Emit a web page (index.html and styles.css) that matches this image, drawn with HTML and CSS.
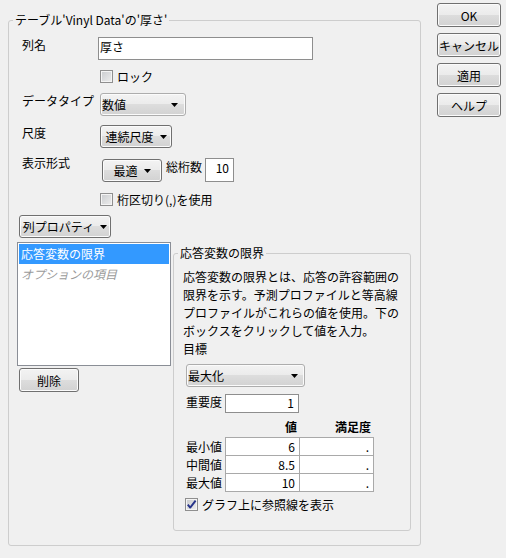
FILE: index.html
```html
<!DOCTYPE html>
<html lang="ja">
<head>
<meta charset="utf-8">
<title>列情報</title>
<link rel="stylesheet" href="styles.css">
</head>
<body>
<div class="window">
  <fieldset class="group main">
    <legend>テーブル'Vinyl Data'の'厚さ'</legend>
    <div class="main-body">
      <div class="row r-name">
        <span class="label">列名</span>
        <div class="field name-field">厚さ</div>
      </div>
      <div class="row check-row r-lock">
        <span class="check"></span><span class="check-text">ロック</span>
      </div>
      <div class="row r-type">
        <span class="label">データタイプ</span>
        <div class="combo type-combo"><span class="combo-text">数値</span><svg class="arrow" width="7" height="4" viewBox="0 0 7 4"><path d="M0 0H7L3.5 4Z"/></svg></div>
      </div>
      <div class="row r-scale">
        <span class="label">尺度</span>
        <div class="menu-btn scale-btn"><span>連続尺度</span><svg class="arrow" width="7" height="4" viewBox="0 0 7 4"><path d="M0 0H7L3.5 4Z"/></svg></div>
      </div>
      <div class="row r-format">
        <span class="label label-format">表示形式</span>
        <div class="menu-btn format-btn"><span>最適</span><svg class="arrow" width="7" height="4" viewBox="0 0 7 4"><path d="M0 0H7L3.5 4Z"/></svg></div>
        <span class="digits-label">総桁数</span>
        <div class="field digits-field">10</div>
      </div>
      <div class="row check-row r-sep">
        <span class="check"></span><span class="check-text">桁区切り(,)を使用</span>
      </div>
      <div class="row r-props">
        <div class="menu-btn props-btn"><span>列プロパティ</span><svg class="arrow" width="7" height="4" viewBox="0 0 7 4"><path d="M0 0H7L3.5 4Z"/></svg></div>
      </div>
      <div class="props-area">
        <div class="props-left">
          <div class="listbox">
            <div class="item selected">応答変数の限界</div>
            <div class="item option">オプションの項目</div>
          </div>
          <div class="btn delete-btn">削除</div>
        </div>
        <fieldset class="group limits">
          <legend>応答変数の限界</legend>
          <div class="limits-body">
            <p class="desc">応答変数の限界とは、応答の許容範囲の<br>限界を示す。予測プロファイルと等高線<br>プロファイルがこれらの値を使用。下の<br>ボックスをクリックして値を入力。</p>
            <div class="goal-label">目標</div>
            <div class="indent">
              <div class="combo goal-combo"><span class="combo-text">最大化</span><svg class="arrow" width="7" height="4" viewBox="0 0 7 4"><path d="M0 0H7L3.5 4Z"/></svg></div>
              <div class="importance">
                <span class="imp-label">重要度</span>
                <div class="field imp-field">1</div>
              </div>
              <div class="limits-grid">
                <span class="hdr-blank"></span>
                <span class="hdr">値</span>
                <span class="hdr">満足度</span>

                <span class="row-label first">最小値</span>
                <span class="cell c1 first">6</span>
                <span class="cell c2 first">.</span>

                <span class="row-label">中間値</span>
                <span class="cell c1">8.5</span>
                <span class="cell c2">.</span>

                <span class="row-label">最大値</span>
                <span class="cell c1">10</span>
                <span class="cell c2">.</span>
              </div>
              <div class="row check-row r-ref">
                <span class="check checked"><svg width="11" height="11" viewBox="0 0 11 11"><path d="M1.8 5.6 L4.2 8.6 L9.6 1.6" fill="none" stroke="#26338a" stroke-width="1.9" stroke-linejoin="round"/></svg></span><span class="check-text">グラフ上に参照線を表示</span>
              </div>
            </div>
          </div>
        </fieldset>
      </div>
    </div>
  </fieldset>
  <div class="buttons">
    <div class="btn side-btn">OK</div>
    <div class="btn side-btn">キャンセル</div>
    <div class="btn side-btn">適用</div>
    <div class="btn side-btn">ヘルプ</div>
  </div>
</div>
</body>
</html>
```

FILE: styles.css
```css
* {
  box-sizing: border-box;
}

html,
body {
  margin: 0;
  padding: 0;
}

body {
  width: 506px;
  height: 558px;
  overflow: hidden;
  background: #f0f0f0;
  color: #000;
  font-family: "Noto Sans CJK JP", "Noto Sans", sans-serif;
  font-size: 12px;
  line-height: 17px;
}

.window {
  display: flex;
  align-items: flex-start;
}

.group {
  margin: 0;
  padding: 0;
  min-width: 0;
  border: 1px solid #cdcdcd;
  border-radius: 3px;
}

.group > legend {
  padding: 0 2px;
  margin-left: 4px;
  line-height: 16px;
}

.main {
  margin: 12px 0 0 8px;
  width: 413px;
}

.main-body {
  padding: 0 9px 14px 8px;
}

.row {
  display: flex;
  align-items: flex-start;
}

.check-row {
  align-items: center;
  height: 13px;
}

.label {
  flex-shrink: 0;
  width: 78px;
  margin-left: 5px;
  margin-top: -1px;
  white-space: nowrap;
}

.label-format {
  margin-top: -4px;
}

.r-name {
  margin-top: 9px;
}

.r-lock {
  margin-top: 10px;
  margin-left: 83px;
}

.r-type {
  margin-top: 10px;
}

.r-scale {
  margin-top: 9px;
}

.r-format {
  margin-top: 10px;
}

.r-sep {
  margin-top: 11px;
  margin-left: 83px;
}

.r-props {
  margin-top: 9px;
  margin-left: 2px;
}

.field {
  background: #fff;
  border: 1px solid #8e8e8e;
  white-space: nowrap;
}

.name-field {
  margin-left: -2px;
  width: 215px;
  height: 23px;
  padding-left: 1px;
}

.digits-label {
  margin-left: 4px;
  white-space: nowrap;
}

.digits-field {
  margin-left: 3px;
  width: 29px;
  height: 24px;
  text-align: right;
  padding-right: 4px;
}

.check {
  flex-shrink: 0;
  width: 13px;
  height: 13px;
  border: 1px solid #8f8f8f;
  background: linear-gradient(135deg, #c9cbce 0%, #eeeeee 100%);
  box-shadow: inset 0 0 0 1px #f4f4f4;
  display: flex;
  align-items: center;
  justify-content: center;
}

.check svg {
  display: block;
}

.check-text {
  margin-left: 4px;
  white-space: nowrap;
}

.btn,
.combo,
.menu-btn {
  border: 1px solid #707070;
  border-radius: 3px;
  background: linear-gradient(#f3f3f3 0%, #ebebeb 50%, #dddddd 50%, #d2d2d2 100%);
  box-shadow: inset 0 0 0 1px #fbfbfb;
  white-space: nowrap;
}

.btn {
  display: flex;
  align-items: center;
  justify-content: center;
}

.arrow {
  display: block;
  flex-shrink: 0;
  fill: #000;
}

.combo {
  display: flex;
  align-items: center;
  justify-content: space-between;
  height: 23px;
  padding: 0 7px 0 1px;
  border-color: #adadad;
}

.type-combo {
  width: 86px;
}

.menu-btn {
  display: flex;
  align-items: center;
  justify-content: center;
  gap: 6px;
  height: 23px;
}

.scale-btn {
  width: 72px;
}

.format-btn {
  width: 60px;
  margin-left: 2px;
  margin-top: 1px;
}

.props-btn {
  width: 92px;
}

.buttons {
  display: flex;
  flex-direction: column;
  gap: 6px;
  margin: 3px 0 0 16px;
}

.side-btn {
  width: 64px;
  height: 24px;
}

.props-area {
  display: flex;
  align-items: flex-start;
  margin-top: 4px;
}

.props-left {
  display: flex;
  flex-direction: column;
  align-items: flex-start;
}

.listbox {
  width: 154px;
  height: 124px;
  background: #fff;
  border: 1px solid #8a8e96;
  padding: 1px;
}

.item {
  height: 20px;
  line-height: 20px;
  padding-left: 2px;
  white-space: nowrap;
}

.item.selected {
  background: #3399ff;
  color: #fff;
}

.item.option {
  font-style: italic;
  color: #9a9a9a;
}

.delete-btn {
  margin-top: 2px;
  margin-left: 2px;
  width: 60px;
  height: 24px;
}

.limits {
  margin: 3px 0 0 2px;
  width: 238px;
}

.limits-body {
  padding: 7px 6px 19px 9px;
}

.desc {
  margin: 0;
  line-height: 18px;
  white-space: nowrap;
}

.goal-label {
  line-height: 18px;
}

.indent {
  margin-left: 3px;
}

.goal-combo {
  margin-top: 6px;
  width: 119px;
  padding-right: 6px;
}

.importance {
  display: flex;
  align-items: flex-start;
  margin-top: 7px;
}

.imp-label {
  width: 39px;
  margin-top: -1px;
  white-space: nowrap;
}

.imp-field {
  width: 74px;
  height: 19px;
  line-height: 15px;
  text-align: right;
  padding-right: 4px;
}

.limits-grid {
  display: grid;
  grid-template-columns: 39px 75px 74px;
  margin-top: 5px;
}

.hdr {
  font-weight: bold;
  text-align: right;
  padding-right: 3px;
  height: 19px;
}

.row-label {
  height: 19px;
  line-height: 19px;
  margin-top: -1px;
  white-space: nowrap;
}

.row-label.first {
  margin-top: 0;
}

.cell {
  background: #fff;
  border: 1px solid #a9a9a9;
  height: 19px;
  line-height: 17px;
  text-align: right;
  padding-right: 4px;
  margin-top: -1px;
}

.cell.first {
  margin-top: 0;
}

.cell.c2 {
  margin-left: -1px;
  width: 75px;
}

.r-ref {
  margin-top: 6px;
  margin-left: -1px;
}
```
